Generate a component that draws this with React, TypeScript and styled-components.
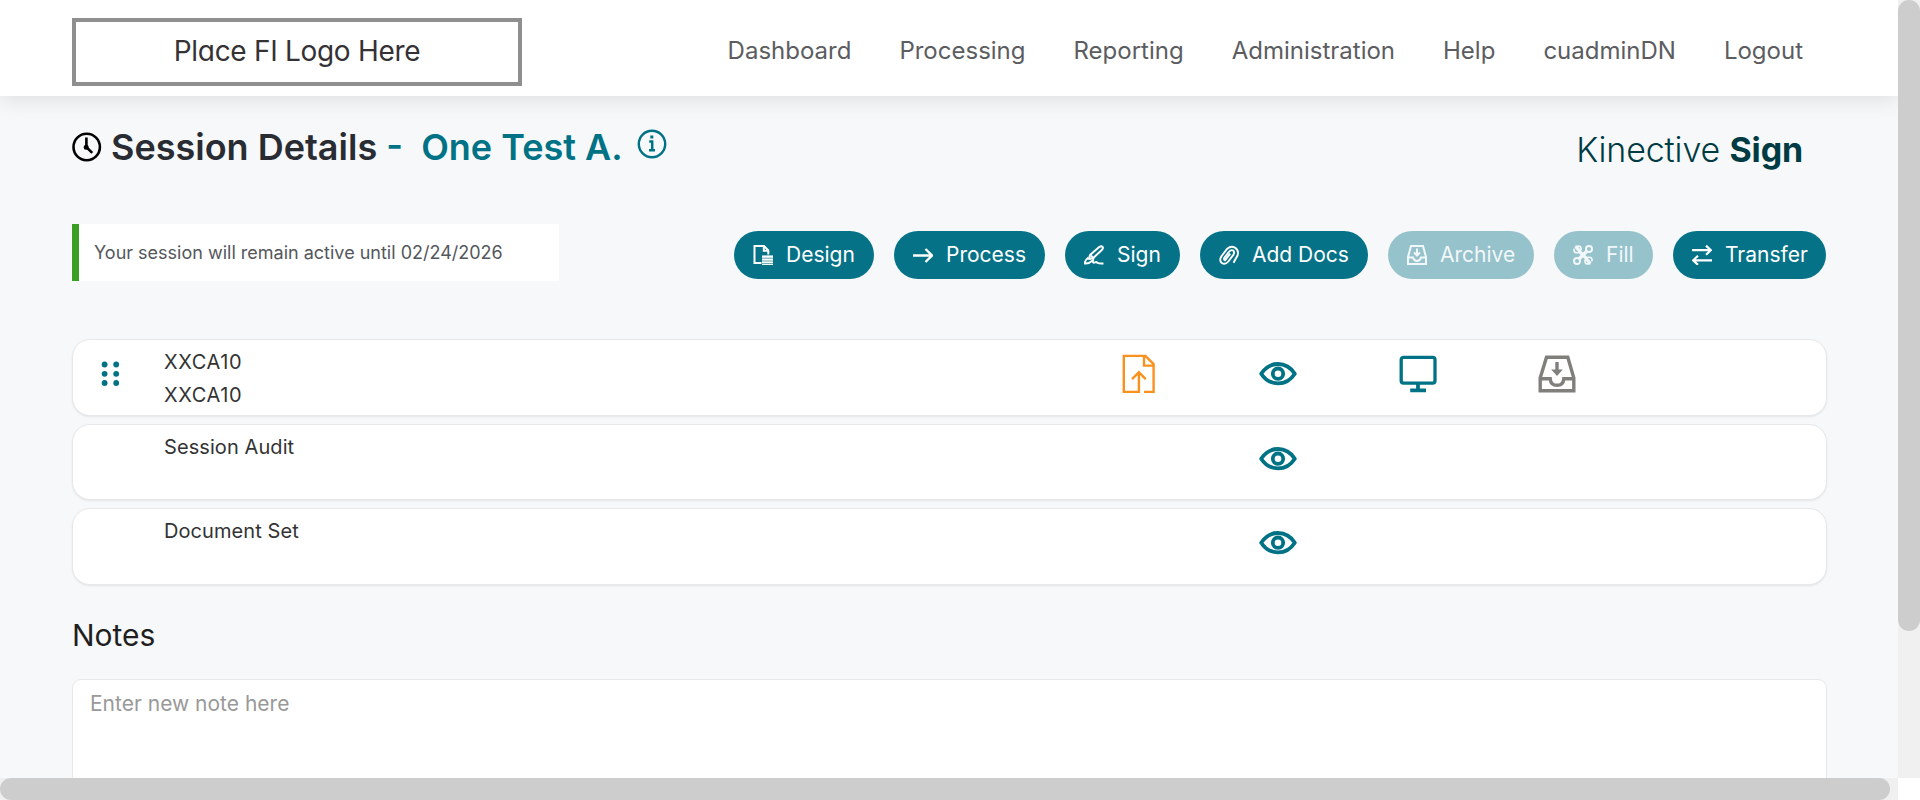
import React from 'react';
import styled, { createGlobalStyle } from 'styled-components';

const GlobalStyle = createGlobalStyle`
  * {
    box-sizing: border-box;
  }

  body {
    margin: 0;
    overflow: hidden;
    font-family: Inter, 'Liberation Sans', sans-serif;
    background-color: #f7f8fa;
  }
`;

const Window = styled.div`
  display: grid;
  grid-template-columns: 1898px 22px;
  grid-template-rows: 778px 22px;
  width: 1920px;
  height: 800px;
  background: #fff;
`;

const Page = styled.div`
  overflow: hidden;
  background-color: #f7f8fa;
`;

const ScrollTrack = styled.div`
  background-color: #f0f0f0;

  &:last-of-type {
    width: 1898px;
  }
`;

const ScrollThumb = styled.div<{ $vertical?: boolean }>`
  width: ${(p) => (p.$vertical ? '22px' : '1890px')};
  height: ${(p) => (p.$vertical ? '631px' : '22px')};
  border-radius: 11px;
  background-color: #cdcdcd;
`;

const Header = styled.header`
  display: flex;
  align-items: flex-start;
  justify-content: space-between;
  height: 96px;
  padding: 18px 95px 0 72px;
  background-color: #fff;
  box-shadow: 0 4px 20px rgba(0, 0, 0, 0.1);
`;

const LogoBox = styled.div`
  display: flex;
  align-items: center;
  justify-content: center;
  width: 450px;
  height: 68px;
  padding-bottom: 2px;
  border: 4px solid #8f8f8f;
  color: #343235;
  font-size: 28px;
  line-height: 34px;
  letter-spacing: -0.3px;
  font-feature-settings: 'cv11';
`;

const Nav = styled.nav`
  display: flex;
  gap: 48px;
  padding-top: 18px;
`;

const NavLink = styled.a`
  color: #5b5d61;
  font-size: 24px;
  line-height: 29px;
  white-space: nowrap;
`;

const Main = styled.main`
  padding: 28px 72px 0 72px;
`;

const TitleRow = styled.div`
  display: flex;
  justify-content: space-between;
  height: 100px;
`;

const Title = styled.h1`
  display: flex;
  align-items: center;
  height: 46px;
  margin: 0;
  color: #2a2c33;
  font-size: 36px;
  font-weight: 600;
  line-height: 46px;
  white-space: pre;

  svg {
    flex: none;
  }
`;

const TitleText = styled.span`
  margin-left: 9px;
`;

const ClientName = styled.span`
  margin-right: 14px;
  color: #007286;
`;

const InfoIcon = styled.svg`
  margin-bottom: 7px;
`;

const Brand = styled.div`
  padding: 5px 23px 0 0;
  color: #003b43;
  font-size: 34px;
  font-weight: 300;
  line-height: 42px;
  letter-spacing: -0.15px;

  strong {
    font-weight: 700;
  }
`;

const ActionRow = styled.div`
  display: flex;
  justify-content: space-between;
`;

const Alert = styled.div`
  display: flex;
  align-items: center;
  width: 487px;
  height: 57px;
  padding-left: 15px;
  border-left: 7px solid #3a9e22;
  background-color: #fff;
  color: #54575c;
  font-size: 18px;
`;

const Buttons = styled.div`
  display: flex;
  gap: 20px;
  padding-top: 7px;
`;

const ActionButton = styled.button<{ $width: number }>`
  display: flex;
  align-items: center;
  gap: 13px;
  width: ${(p) => p.$width}px;
  height: 48px;
  padding: 0 0 1px 19px;
  border: none;
  border-radius: 24px;
  background-color: #057287;
  color: #fff;
  font-family: inherit;
  font-size: 21px;
  white-space: nowrap;

  svg {
    flex: none;
    margin-top: 1px;
  }

  &:disabled {
    background-color: #96c2cb;
    color: #f2f7f9;
  }
`;

const Cards = styled.div`
  display: grid;
  gap: 8px;
  margin: 58px -1px 0 0;
`;

const Card = styled.section`
  display: grid;
  grid-template-columns: 91px 905px repeat(4, 139.5px);
  height: 76.5px;
  border: 1px solid #e6e8ea;
  border-radius: 18px;
  background-color: #fff;
  box-shadow: 0 1px 2px rgba(0, 0, 0, 0.08);
`;

const Handle = styled.div`
  padding: 21px 0 0 28px;
`;

const CardText = styled.div<{ $spacing: number }>`
  padding-top: 6px;
  color: #333;
  font-size: 20px;
  line-height: 33px;
  letter-spacing: ${(p) => p.$spacing}px;
`;

const CardIcon = styled.div`
  display: flex;
  justify-content: center;
  height: 40px;
  margin-top: 14px;
`;

const NotesTitle = styled.h2`
  margin: 32px 0 26px;
  color: #1f1f1f;
  font-size: 30px;
  font-weight: 400;
  line-height: 36px;
`;

const NoteField = styled.textarea`
  display: block;
  width: 1755px;
  height: 160px;
  padding: 11px 17px 12px;
  border: 1px solid #e6e8ea;
  border-radius: 9px;
  outline: none;
  resize: none;
  font-family: inherit;
  font-size: 21px;
  line-height: 25px;

  &::placeholder {
    color: #999;
  }
`;

const Icon = ({ name }: { name: string }) => (
  <svg width="20" height="20" viewBox="0 0 20 20" fill="none" stroke="currentColor" strokeWidth="2">
    {name === 'Design' && (
      <>
        <path d="M8.5 18H1.5V1H11l4.3 4.3V9.5" />
        <path d="M10.8 1v4.8h4.6" />
        <path d="M9 10.4h11v9.6H9z" fill="currentColor" stroke="none" />
        <path d="M9 13.2h11M9 16h11M9 18.6h11" stroke="#4e9aa9" strokeWidth="0.9" />
      </>
    )}
    {name === 'Process' && <path d="M0 10.5h19M12.5 4l6.5 6.5-6.5 6.5" strokeWidth="2.3" />}
    {name === 'Sign' && (
      <>
        <path d="M5 14l1-4 9.5-8.2q2-1.3 3 .1t-.7 3L9 13.2z" strokeLinejoin="round" />
        <path d="M7 10.5l2 2.3M4.5 12.5q-4 3-3.5 6 4 .4 8-3.2-.6 3.2 2 2 1.5-1 2.5.6 2 1 6 .6" />
      </>
    )}
    {name === 'Add Docs' && (
      <path d="M14.5 17.8l4-7.3q1.6-5-2.2-7.6-4-2.6-8.1.8L2.6 11q-2.8 4.5.2 7 3.5 2 6.5-1.5l5.2-6.8q1.5-3.2-.7-4.4-2-.7-4 1.7L5.3 12.8q-.8 2.2.8 2.4l5.1-6.5" strokeWidth="1.9" />
    )}
    {name === 'Archive' && (
      <>
        <path d="M1 19v-7L4 1h12l3 11v7zM1 12.5h5q1 3.5 4 3.5t4-3.5h5" />
        <path d="M10 3.5V10M7 7.5l3 3 3-3" />
      </>
    )}
    {name === 'Fill' && (
      <>
        <path d="M6.4 6.4l7.2 7.2M6.2 13.8l7.6-7.6" strokeWidth="3.4" />
        <circle cx="16" cy="4" r="3" />
        <circle cx="4" cy="16" r="3" />
        <path d="M2 2.2l3 3 1-1.2-2.6-2.7q5-1 4.7 3.1L5.1 7.6Q.6 8.6 1 3.8M18 17.8l-3-3-1 1.2 2.6 2.7q-5 1-4.7-3.1l3-3.2q4.5-1 4.1 3.8" strokeWidth="1.7" />
      </>
    )}
    {name === 'Transfer' && <path d="M0 5.2h18.5M14 .6l4.8 4.6L14 9.8M20 15.3H1.5M6 10.7l-4.8 4.6L6 19.9" strokeWidth="2.2" />}
  </svg>
);

const EyeIcon = () => (
  <svg width="38" height="40" viewBox="0 0 38 40" fill="none" stroke="#007286" strokeWidth="3.8">
    <path d="M2.2 19.7Q8.5 10 19 10t16.8 9.7Q29.5 29.4 19 29.4T2.2 19.7z" strokeLinejoin="round" />
    <circle cx="19" cy="19.7" r="5.2" />
  </svg>
);

const UploadIcon = () => (
  <svg width="38" height="40" viewBox="0 0 38 40" fill="none" stroke="#fa911e" strokeWidth="2.4">
    <path d="M19.2 37.9H3.8V1.9h21.6l8.2 8.2v27.8H24" />
    <path d="M24 2v9.6h9.6M18.9 39V17.8M12.1 25.2l6.8-7 6.8 7" />
  </svg>
);

const MonitorIcon = () => (
  <svg width="38" height="40" viewBox="0 0 38 40" fill="none" stroke="#007286" strokeWidth="3.3">
    <rect x="2.2" y="3.3" width="33.8" height="25.8" rx="2.4" />
    <path d="M19 30v7M11.2 36.3h15.8" strokeWidth="3.8" />
  </svg>
);

const ArchiveIcon = () => (
  <svg width="38" height="40" viewBox="0 0 38 40" fill="none" stroke="#807f7b" strokeWidth="3.4">
    <path d="M2.2 36.7V24L8.5 3.2h21.3L35.8 24v12.7zM2 24.8h10.2q.6 6.5 6.8 6.5t6.8-6.5H36" />
    <path d="M17.3 8h3.4v7.6h4.1L19 21.9l-5.8-6.3h4.1z" fill="#807f7b" stroke="none" />
  </svg>
);

const navItems = ['Dashboard', 'Processing', 'Reporting', 'Administration', 'Help', 'cuadminDN', 'Logout'];

const actions = [
  { label: 'Design', width: 140 },
  { label: 'Process', width: 151 },
  { label: 'Sign', width: 115 },
  { label: 'Add Docs', width: 168 },
  { label: 'Archive', width: 146, disabled: true },
  { label: 'Fill', width: 99, disabled: true },
  { label: 'Transfer', width: 153 },
];

const documents = [
  { lines: ['XXCA10', 'XXCA10'], full: true },
  { lines: ['Session Audit'], full: false },
  { lines: ['Document Set'], full: false },
];

function App() {
  return (
    <Window>
      <GlobalStyle />
      <Page>
        <Header>
          <LogoBox>Place FI Logo Here</LogoBox>
          <Nav>
            {navItems.map((item) => (
              <NavLink key={item}>{item}</NavLink>
            ))}
          </Nav>
        </Header>
        <Main>
          <TitleRow>
            <Title>
              <svg width="30" height="30" viewBox="0 0 30 30" fill="none" stroke="#000" strokeWidth="2.6">
                <circle cx="14.7" cy="15" r="13.2" />
                <path d="M14.4 5.5v9.8l5.8 5.6" />
                <circle cx="14.2" cy="15.3" r="1.2" />
              </svg>
              <TitleText>Session Details </TitleText>
              <ClientName>{'-  One Test A.'}</ClientName>
              <InfoIcon width="30" height="30" viewBox="0 0 30 30" fill="none" stroke="#007286" strokeWidth="2.4">
                <circle cx="15" cy="15" r="13.2" />
                <path d="M12.2 12.5h3v8.8M12 21.3h6" strokeWidth="2.5" />
                <path d="M13.3 8h3" strokeWidth="3" />
              </InfoIcon>
            </Title>
            <Brand>
              Kinective <strong>Sign</strong>
            </Brand>
          </TitleRow>
          <ActionRow>
            <Alert>Your session will remain active until 02/24/2026</Alert>
            <Buttons>
              {actions.map(({ label, width, disabled }) => (
                <ActionButton key={label} $width={width} disabled={disabled}>
                  <Icon name={label} />
                  {label}
                </ActionButton>
              ))}
            </Buttons>
          </ActionRow>
          <Cards>
            {documents.map(({ lines, full }, index) => (
              <Card key={index}>
                <Handle>
                  {full && (
                    <svg width="20" height="26" viewBox="0 0 20 26" fill="#007286">
                      {[3.5, 12.8, 22].map((y) => (
                        <React.Fragment key={y}>
                          <circle cx="3.6" cy={y} r="2.9" />
                          <circle cx="15.2" cy={y} r="2.9" />
                        </React.Fragment>
                      ))}
                    </svg>
                  )}
                </Handle>
                <CardText $spacing={full ? 0.6 : 0.08}>
                  {lines.map((line, i) => (
                    <div key={i}>{line}</div>
                  ))}
                </CardText>
                <CardIcon>{full && <UploadIcon />}</CardIcon>
                <CardIcon>
                  <EyeIcon />
                </CardIcon>
                <CardIcon>{full && <MonitorIcon />}</CardIcon>
                <CardIcon>{full && <ArchiveIcon />}</CardIcon>
              </Card>
            ))}
          </Cards>
          <NotesTitle>Notes</NotesTitle>
          <NoteField placeholder="Enter new note here" />
        </Main>
      </Page>
      <ScrollTrack>
        <ScrollThumb $vertical />
      </ScrollTrack>
      <ScrollTrack>
        <ScrollThumb />
      </ScrollTrack>
    </Window>
  );
}

export default App;
